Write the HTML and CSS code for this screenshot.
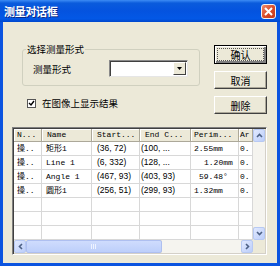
FILE: index.html
```html
<!DOCTYPE html>
<html lang="zh-CN">
<head>
  <meta charset="UTF-8" />
  <title>测量对话框</title>
  <link rel="stylesheet" href="styles.css">
</head>
<body>
  <div class="window">
    <div class="titlebar">
      <span class="title">测量对话框</span>
      <span class="close">
        <svg width="9" height="9" viewBox="0 0 9 9"><path d="M1 1 L8 8 M8 1 L1 8" stroke="#fff" stroke-width="2" fill="none"/></svg>
      </span>
    </div>

    <div class="client">
      <div class="top">
        <div class="left">
          <fieldset class="group">
            <legend>选择测量形式</legend>
            <div class="field">
              <span class="field-label">测量形式</span>
              <div class="combo">
                <span class="combo-btn">
                  <svg width="5" height="3" viewBox="0 0 5 3"><path d="M0 0 H5 L2.5 3 Z" fill="#000"/></svg>
                </span>
              </div>
            </div>
          </fieldset>
          <label class="check">
            <span class="box">
              <svg width="7" height="7" viewBox="0 0 7 7"><path d="M1 3 L3 5 L6 1" stroke="#000" stroke-width="1.4" fill="none"/></svg>
            </span>
            在图像上显示结果
          </label>
        </div>
        <div class="buttons">
          <button class="btn default"><span class="focus">确认</span></button>
          <button class="btn">取消</button>
          <button class="btn">删除</button>
        </div>
      </div>

      <div class="listview">
        <div class="lv-main">
          <div class="lv-grid">
            <div class="hd">N...</div>
            <div class="hd pad5">Name</div>
            <div class="hd pad5">Start...</div>
            <div class="hd pad5">End C...</div>
            <div class="hd">Perim...</div>
            <div class="hd pad1">Ar</div>

            <div class="cell">操..</div>
            <div class="cell pad4">矩形1</div>
            <div class="cell coord pad5">(36, 72)</div>
            <div class="cell coord pad1">(100, ...</div>
            <div class="cell">2.55mm</div>
            <div class="cell pad1">0.</div>

            <div class="cell">操..</div>
            <div class="cell pad4">Line 1</div>
            <div class="cell coord pad5">(6, 332)</div>
            <div class="cell coord pad1">(128, ...</div>
            <div class="cell right">1.20mm</div>
            <div class="cell pad1">0.</div>

            <div class="cell">操..</div>
            <div class="cell pad4">Angle 1</div>
            <div class="cell coord pad5">(467, 93)</div>
            <div class="cell coord pad1">(403, 93)</div>
            <div class="cell pad8">59.48°</div>
            <div class="cell pad1">0.</div>

            <div class="cell">操..</div>
            <div class="cell pad4">圆形1</div>
            <div class="cell coord pad5">(256, 51)</div>
            <div class="cell coord pad1">(299, 93)</div>
            <div class="cell">1.32mm</div>
            <div class="cell pad1">0.</div>

            <div class="cell"></div><div class="cell"></div><div class="cell"></div>
            <div class="cell"></div><div class="cell"></div><div class="cell"></div>
            <div class="cell"></div><div class="cell"></div><div class="cell"></div>
            <div class="cell"></div><div class="cell"></div><div class="cell"></div>
            <div class="cell"></div><div class="cell"></div><div class="cell"></div>
            <div class="cell"></div><div class="cell"></div><div class="cell"></div>
          </div>
          <div class="vscroll">
            <span class="sb-btn">
              <svg width="7" height="5" viewBox="0 0 7 5"><path d="M1 4 L3.5 1.5 L6 4" stroke="#4d6185" stroke-width="1.6" fill="none"/></svg>
            </span>
            <span class="sb-track"></span>
            <span class="sb-btn">
              <svg width="7" height="5" viewBox="0 0 7 5"><path d="M1 1 L3.5 3.5 L6 1" stroke="#4d6185" stroke-width="1.6" fill="none"/></svg>
            </span>
          </div>
        </div>
        <div class="lv-bottom">
          <div class="hscroll">
            <span class="sb-btn">
              <svg width="5" height="7" viewBox="0 0 5 7"><path d="M4 1 L1.5 3.5 L4 6" stroke="#4d6185" stroke-width="1.6" fill="none"/></svg>
            </span>
            <span class="thumb"><span class="grip"></span></span>
            <span class="sb-track"></span>
            <span class="sb-btn">
              <svg width="5" height="7" viewBox="0 0 5 7"><path d="M1 1 L3.5 3.5 L1 6" stroke="#4d6185" stroke-width="1.6" fill="none"/></svg>
            </span>
          </div>
          <div class="corner"></div>
        </div>
      </div>
    </div>
  </div>
</body>
</html>
```

FILE: styles.css
```css
body {
  margin: 0;
  font-family: "Noto Sans CJK SC", "Liberation Sans", sans-serif;
  font-size: 9.5px;
  color: #000;
}
.window {
  width: 280px;
  height: 266px;
  display: flex;
  flex-direction: column;
}
.titlebar {
  height: 22px;
  display: flex;
  align-items: center;
  justify-content: space-between;
  padding: 0 4px 0 4px;
  background: linear-gradient(to bottom, #3d8cf5 0%, #0a5bdc 14%, #0453df 50%, #0358e6 85%, #0047cc 100%);
}
.title {
  color: white;
  font-weight: bold;
  font-size: 11px;
  line-height: 12px;
  letter-spacing: -0.3px;
  text-shadow: 1px 1px 0 #0b2a86;
}
.close {
  width: 15px;
  height: 15px;
  box-sizing: border-box;
  border: 1px solid #f2f2f2;
  border-radius: 3px;
  background: linear-gradient(135deg, #f08a6c, #d84a26 55%, #c4391b);
  display: flex;
  align-items: center;
  justify-content: center;
}
.client {
  flex: 1;
  background-color: #ECE9D8;
  border: 3px solid #0b54e0;
  border-top: none;
  padding: 23px 10px 0 9px;
}
.top {
  display: flex;
  justify-content: space-between;
}
.left {
  width: 201px;
}
.group {
  margin: -1px 0 0 10px;
  width: 178px;
  box-sizing: border-box;
  border: 1px solid #d0d0bf;
  border-radius: 3px;
  padding: 5px 11px 8px 3px;
}
.group legend {
  padding: 0 1px;
  line-height: 11px;
  color: #000;
}
.field {
  display: flex;
  align-items: center;
  margin-left: 7px;
}
.field-label {
  width: 76px;
}
.combo {
  width: 79px;
  height: 17px;
  box-sizing: border-box;
  background: white;
  border: 1px solid;
  border-color: #8a8a8a #e6e6e6 #e6e6e6 #8a8a8a;
  box-shadow: inset 1px 1px 0 #404040;
  display: flex;
  align-items: center;
  justify-content: flex-end;
  padding-right: 1px;
}
.combo-btn {
  width: 13px;
  height: 13px;
  box-sizing: border-box;
  background: #ece9d8;
  border: 1px solid;
  border-color: #fff #404040 #404040 #fff;
  display: flex;
  align-items: center;
  justify-content: center;
}
.check {
  display: flex;
  align-items: center;
  gap: 6px;
  margin: 12px 0 0 15px;
  line-height: 10px;
}
.box {
  width: 9px;
  height: 9px;
  box-sizing: border-box;
  border: 1px solid #555;
  background: white;
  display: flex;
  align-items: center;
  justify-content: center;
}
.buttons {
  width: 53px;
  display: flex;
  flex-direction: column;
  gap: 7px;
}
.btn {
  height: 18px;
  padding: 0;
  font-family: inherit;
  font-size: 10px;
  background: #ece9d8;
  border: 1px solid;
  border-color: #fff #404040 #404040 #fff;
  box-shadow: inset -1px -1px 0 #aca899;
  color: #000;
}
.btn.default {
  height: 19px;
  border: 1px solid #000;
  box-shadow: inset 1px 1px 0 #fff, inset -2px -2px 0 #808080;
  padding: 2px;
}
.focus {
  display: block;
  height: 100%;
  box-sizing: border-box;
  border: 1px dotted #555;
  line-height: 11px;
}
.listview {
  width: 255px;
  margin-top: 13px;
  box-sizing: border-box;
  border: 1px solid;
  border-color: #808080 #fff #fff #808080;
  box-shadow: inset 1px 1px 0 #404040, inset -1px -1px 0 #d4d0c8;
  padding: 1px;
}
.lv-main {
  display: flex;
}
.lv-grid {
  width: 239px;
  height: 111px;
  overflow: hidden;
  background: white;
  display: grid;
  grid-template-columns: 28px 50px 48px 51px 48px 14px;
  grid-template-rows: 13px repeat(7, 14px);
  font-family: "Liberation Mono", "Noto Sans CJK SC", monospace;
  font-size: 8px;
}
.hd, .cell {
  box-sizing: border-box;
  padding-left: 3px;
  white-space: nowrap;
  overflow: hidden;
}
.hd {
  background: #ece9d8;
  border-right: 1px solid #aca899;
  border-bottom: 1px solid #aca899;
  box-shadow: inset 1px 1px 0 #fff;
  line-height: 12px;
}
.cell {
  border-right: 1px solid #d8d8d8;
  border-bottom: 1px solid #d8d8d8;
  line-height: 13px;
}
.coord {
  font-family: "Liberation Sans", sans-serif;
  font-size: 8.5px;
}
.pad1 { padding-left: 1px; }
.pad4 { padding-left: 4px; }
.pad5 { padding-left: 5px; }
.pad8 { padding-left: 8px; }
.right { padding-left: 13px; }
.vscroll {
  width: 12px;
  height: 111px;
  display: flex;
  flex-direction: column;
}
.sb-btn {
  flex: none;
  width: 12px;
  height: 13px;
  box-sizing: border-box;
  border: 1px solid #b7c9f3;
  border-radius: 2px;
  background: linear-gradient(135deg, #e1e9fe, #bccefa);
  display: flex;
  align-items: center;
  justify-content: center;
}
.sb-track {
  flex: 1;
  background: #f5f4ef;
}
.lv-bottom {
  display: flex;
  height: 13px;
}
.hscroll {
  width: 239px;
  display: flex;
}
.thumb {
  width: 136px;
  box-sizing: border-box;
  border: 1px solid #aebff0;
  border-radius: 2px;
  background: linear-gradient(to bottom, #cfdcfd, #bdcffa);
  display: flex;
  align-items: center;
  justify-content: center;
}
.grip {
  width: 6px;
  height: 5px;
  background: repeating-linear-gradient(to right, #eef3ff 0 1px, transparent 1px 2px);
}
.corner {
  flex: 1;
  background: #ece9d8;
}
```
